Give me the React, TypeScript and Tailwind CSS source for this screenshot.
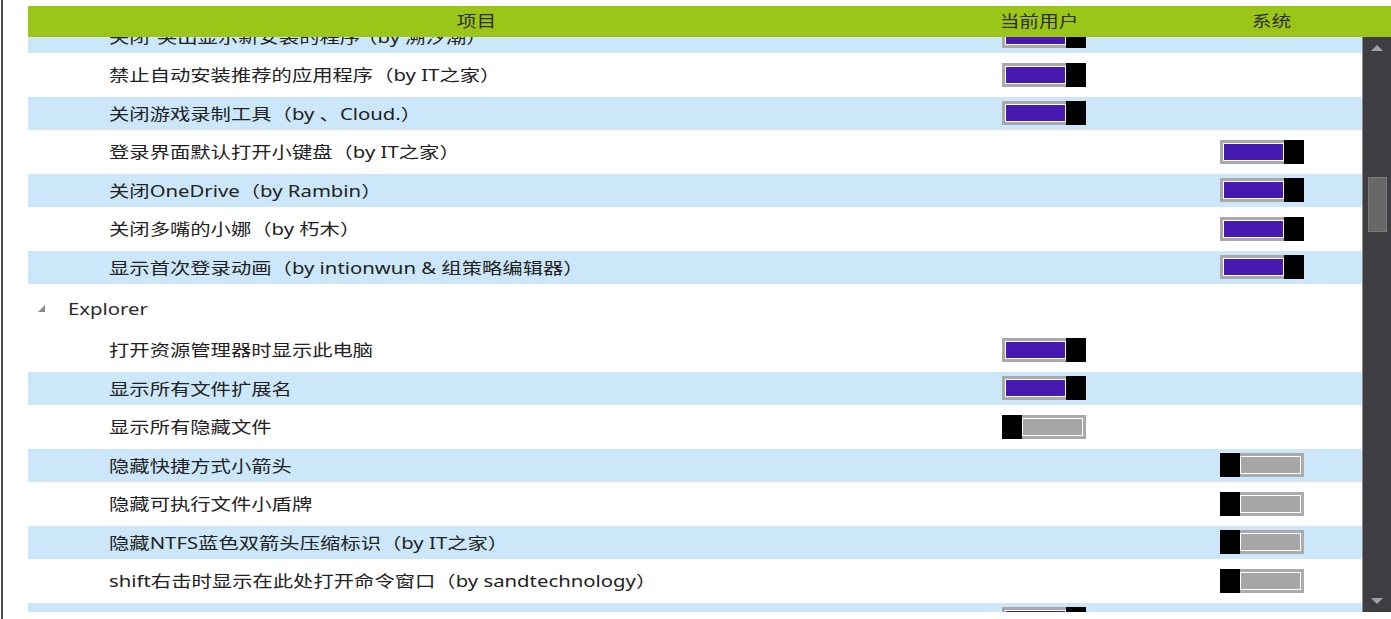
import React from 'react'

type Item = {
  label: string
  user?: boolean
  system?: boolean
}

type Row = { kind: 'item'; item: Item } | { kind: 'group'; title: string }

const rows: Row[] = [
  { kind: 'item', item: { label: '关闭“突出显示新安装的程序”（by 溯汐潮）', user: true } },
  { kind: 'item', item: { label: '禁止自动安装推荐的应用程序（by IT之家）', user: true } },
  { kind: 'item', item: { label: '关闭游戏录制工具（by 、Cloud.）', user: true } },
  { kind: 'item', item: { label: '登录界面默认打开小键盘（by IT之家）', system: true } },
  { kind: 'item', item: { label: '关闭OneDrive（by Rambin）', system: true } },
  { kind: 'item', item: { label: '关闭多嘴的小娜（by 朽木）', system: true } },
  { kind: 'item', item: { label: '显示首次登录动画（by intionwun & 组策略编辑器）', system: true } },
  { kind: 'group', title: 'Explorer' },
  { kind: 'item', item: { label: '打开资源管理器时显示此电脑', user: true } },
  { kind: 'item', item: { label: '显示所有文件扩展名', user: true } },
  { kind: 'item', item: { label: '显示所有隐藏文件', user: false } },
  { kind: 'item', item: { label: '隐藏快捷方式小箭头', system: false } },
  { kind: 'item', item: { label: '隐藏可执行文件小盾牌', system: false } },
  { kind: 'item', item: { label: '隐藏NTFS蓝色双箭头压缩标识（by IT之家）', system: false } },
  { kind: 'item', item: { label: 'shift右击时显示在此处打开命令窗口（by sandtechnology）', system: false } },
  { kind: 'item', item: { label: '', user: true } },
]

const font = { fontFamily: '"Noto Sans", "Noto Sans CJK SC", sans-serif' }

function Toggle({ on }: { on: boolean }) {
  if (on) {
    return (
      <div className="flex w-[84px] h-[24px]">
        <div className="flex-1 border-[3px] border-r-0 border-[#a9a9a9] bg-[#a9a9a9]">
          <div className="h-full border border-white bg-[#4619b0]" />
        </div>
        <div className="w-[20px] bg-black" />
      </div>
    )
  }
  return (
    <div className="flex w-[84px] h-[24px]">
      <div className="w-[20px] bg-black" />
      <div className="flex-1 border-[3px] border-l-0 border-[#ababab] bg-[#ababab]">
        <div className="h-full border border-white bg-[#a6a6a6]" />
      </div>
    </div>
  )
}

// the screenshot is stretched sideways, so the text is widened to match
function Wide({ children, center }: { children: React.ReactNode; center?: boolean }) {
  return (
    <span className={`inline-block whitespace-nowrap scale-x-[1.27] ${center ? 'origin-center' : 'origin-left'}`}>
      {children}
    </span>
  )
}

export default function App() {
  let itemIndex = 0

  return (
    <div className="w-[1391px] h-[619px] bg-white flex overflow-hidden" style={font}>
      <div className="w-[1px]" />
      <div className="w-[2px] bg-[#4d4d4d]" />
      <div className="w-[25px]" />

      <div className="flex-1 flex flex-col">
        <div className="h-[6px]" />
        {/* header */}
        <div className="h-[31px] bg-[#9cc617] grid grid-cols-[897px_228px_1fr] items-center text-[15.5px] text-[#2d2d2d] relative z-10">
          <div className="text-center"><Wide center>项目</Wide></div>
          <div className="text-center"><Wide center>当前用户</Wide></div>
          <div className="text-center"><Wide center>系统</Wide></div>
        </div>

        <div className="h-[575px] flex">
          {/* list */}
          <div className="flex-1 overflow-hidden">
            <div className="-mt-[20px]">
              {rows.map((row, i) => {
                if (row.kind === 'group') {
                  return (
                    <div key={i} className="h-[44px] flex items-center">
                      <div className="w-[40px] pl-[9px] flex">
                        <svg width="9" height="9" viewBox="0 0 9 9">
                          <polygon points="8,1 8,8 1,8" fill="#8a8a8a" />
                        </svg>
                      </div>
                      <span className="text-[16px] text-[#2b2b2b]"><Wide>{row.title}</Wide></span>
                    </div>
                  )
                }
                const striped = itemIndex % 2 === 0
                itemIndex++
                const it = row.item
                return (
                  <div key={i} className="h-[38.5px] flex items-center">
                    <div
                      className={`h-[33px] w-full grid grid-cols-[974px_218px_1fr] items-center ${
                        striped ? 'bg-[#cbe7f9]' : ''
                      }`}
                    >
                      <div className="pl-[81px] text-[16px] text-[#222] pt-[1px]">
                        <Wide>{it.label}</Wide>
                      </div>
                      <div>{it.user !== undefined && <Toggle on={it.user} />}</div>
                      <div>{it.system !== undefined && <Toggle on={it.system} />}</div>
                    </div>
                  </div>
                )
              })}
            </div>
          </div>

          {/* scrollbar */}
          <div className="w-[29px] bg-[#3e3e42] border-l border-[#8c8c8c] flex flex-col items-center">
            <div className="h-[20px] flex items-center justify-center mt-[1px]">
              <svg width="12" height="6" viewBox="0 0 12 6">
                <polygon points="6,0 12,6 0,6" fill="#a0a0a0" />
              </svg>
            </div>
            <div className="h-[119px]" />
            <div className="w-[19px] h-[55px] bg-[#686868] border border-[#7a7a7a]" />
            <div className="flex-1" />
            <div className="h-[20px] flex items-center justify-center mb-[1px]">
              <svg width="12" height="6" viewBox="0 0 12 6">
                <polygon points="0,0 12,0 6,6" fill="#a0a0a0" />
              </svg>
            </div>
          </div>
        </div>
      </div>
    </div>
  )
}
